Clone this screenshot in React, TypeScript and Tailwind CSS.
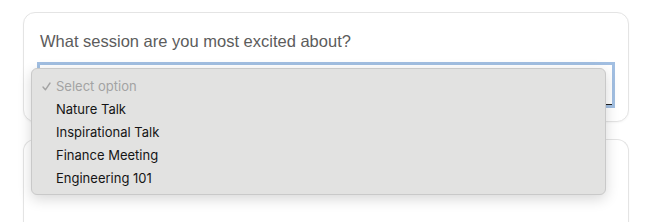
const options = ['Nature Talk', 'Inspirational Talk', 'Finance Meeting', 'Engineering 101']

export default function App() {
  return (
    <div className="h-[222px] overflow-hidden bg-white pl-[23px] pr-[27px] pt-[12px] font-['Liberation_Sans',Arial,sans-serif]">
      {/* question card */}
      <div className="rounded-xl border border-[#e4e4e4] bg-white px-4 pt-4 pb-[16px] shadow-[0_1px_2px_rgba(0,0,0,0.04)]">
        <div className="text-[16.5px] leading-6 text-[#5c5c5c]">What session are you most excited about?</div>
        <div className="relative mt-3">
          <div className="h-10 border-b border-[#222] bg-white ring-[3px] ring-[#a2bfe2]" />

          {/* native-looking dropdown */}
          <div className="absolute left-[-9px] top-[3px] z-10 w-[575px] rounded-md border border-[#c9c9c9] bg-[#e2e2e1] pt-[6px] pb-[4px] shadow-[0_4px_14px_rgba(0,0,0,0.16)] font-['Inter','Noto_Sans',sans-serif] text-[13px]">
            <div className="flex h-[23px] items-center text-[#a3a3a3]">
              <span className="flex w-[24px] pl-[10px]">
                <svg width="9" height="9" viewBox="0 0 9 9" fill="none" stroke="currentColor" strokeWidth="1.4" strokeLinecap="round" strokeLinejoin="round">
                  <path d="M1 5 L3.4 7.8 L8 1" />
                </svg>
              </span>
              <span>Select option</span>
            </div>
            {options.map((o) => (
              <div key={o} className="flex h-[23px] items-center text-[#151515]">
                <span className="w-[24px]" />
                <span>{o}</span>
              </div>
            ))}
          </div>
        </div>
      </div>

      {/* next card, cut off by the frame */}
      <div className="mt-[17px] h-[83px] rounded-t-xl border border-b-0 border-[#e4e4e4] bg-white shadow-[0_1px_2px_rgba(0,0,0,0.04)]" />
    </div>
  )
}
